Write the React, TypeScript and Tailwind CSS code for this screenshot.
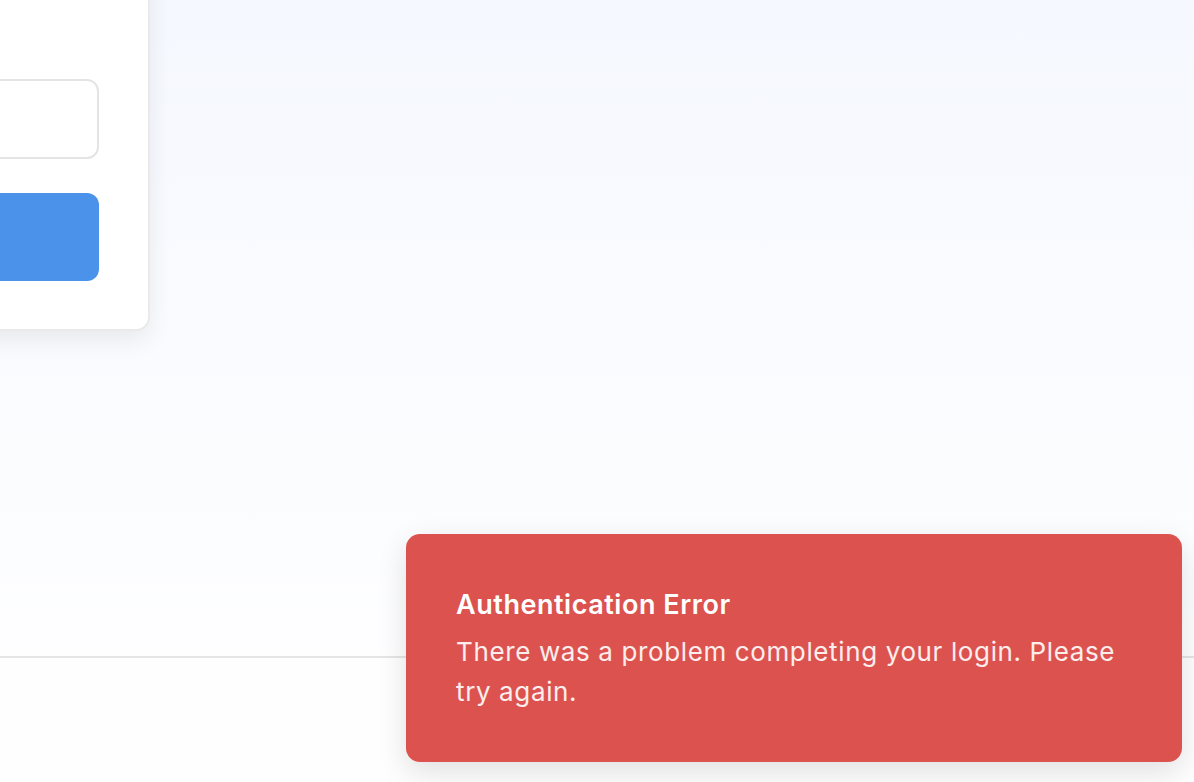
export default function App() {
  return (
    <div className="relative flex h-[782px] flex-col overflow-hidden font-['Inter','Liberation_Sans',sans-serif]">
      <main className="h-[656px] overflow-hidden bg-gradient-to-b from-[#f5f8fe] to-[#fefeff]">
        <div className="-ml-[298px] -mt-[60px] w-[448px] rounded-[14px] border-2 border-[#eaeaea] bg-white px-[49px] pt-[137px] pb-[48px] shadow-[0_10px_24px_rgba(0,0,0,0.07)]">
          <input
            type="email"
            aria-label="Email address"
            className="block h-[80px] w-full rounded-[12px] border-2 border-[#e4e4e4] bg-white px-5 text-[22px] outline-none"
          />
          <button
            aria-label="Continue"
            className="mt-[34px] block h-[88px] w-full rounded-[12px] bg-[#4a92ea]"
          />
        </div>
      </main>
      <footer className="flex-1 border-t-2 border-[#e5e5e5] bg-[#fefefe]" />

      <div className="absolute right-[12px] bottom-[20px] h-[228px] w-[776px] rounded-[14px] bg-[#dc524e] pl-[50px] pr-[56px] pt-[54px] shadow-[0_10px_30px_rgba(0,0,0,0.12)]">
        <div className="text-[27px] font-semibold leading-[34px] tracking-[0.02em] text-white">Authentication Error</div>
        <div className="mt-[10px] text-[26px] leading-[40px] tracking-[0.024em] text-white/90">
          There was a problem completing your login. Please try again.
        </div>
      </div>
    </div>
  );
}
